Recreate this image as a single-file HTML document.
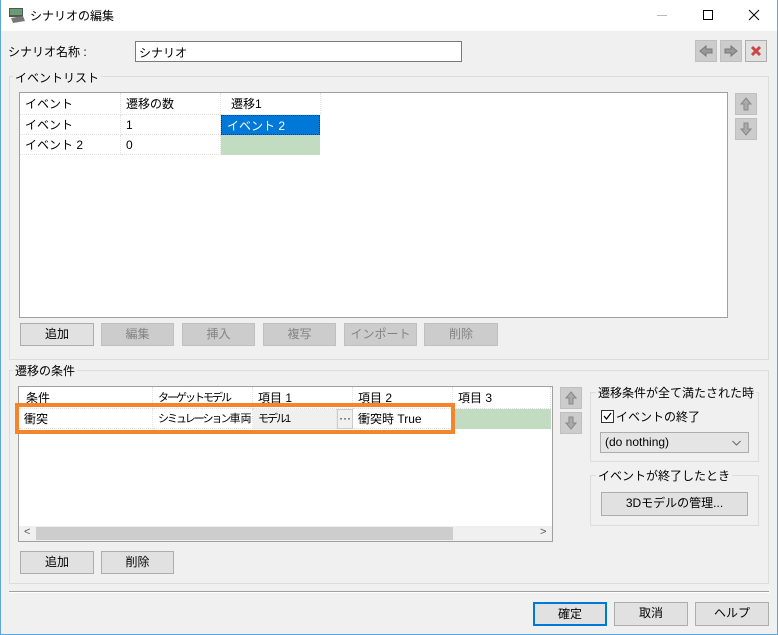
<!DOCTYPE html><html><head><meta charset="utf-8"><style>
*{box-sizing:border-box;margin:0;padding:0}
body{width:778px;height:635px;position:relative;background:#f0f0f0;font-family:"Liberation Sans","Noto Sans CJK JP",sans-serif;font-size:12px;color:#000;overflow:hidden}
.a{position:absolute}
.btn{position:absolute;background:#e1e1e1;border:1px solid #adadad;text-align:center;line-height:21px;font-size:12px}
.dis{background:#cccccc;border-color:#bfbfbf;color:#838383}
.ib{position:absolute;width:22px;height:22px;background:#cccccc;border:1px solid #bfbfbf}
.grp{position:absolute;border:1px solid #dcdcdc}
.gl{position:absolute;background:#f0f0f0;padding:0 2px;font-size:12px}
.cell{position:absolute;height:20px;line-height:20px;padding-left:5px;border-right:1px dotted #e0e0e0;border-bottom:1px dotted #e0e0e0;white-space:nowrap;overflow:hidden}
.nar{letter-spacing:-2px;font-size:11px}
</style></head><body>
<div class="a" style="left:0;top:0;width:778px;height:31px;background:#fff"></div>
<div class="a" style="left:0;top:0;width:1px;height:635px;background:#5ea6d8"></div>
<div class="a" style="right:0;top:0;width:1px;height:635px;background:#5ea6d8"></div>
<div class="a" style="left:0;bottom:0;width:778px;height:1px;background:#5ea6d8"></div>
<svg class="a" style="left:8px;top:6px" width="18" height="18"><rect x="1" y="2" width="14" height="9" fill="#4a5a5a"/><rect x="2" y="3" width="12" height="6" fill="#6a9a70"/><path d="M3 12 L15 10 L17 15 L5 17Z" fill="#777"/></svg>
<div class="a" style="left:30px;top:7px;font-size:12px">シナリオの編集</div>
<div class="a" style="left:657px;top:15px;width:10px;height:1px;background:#bbb"></div>
<div class="a" style="left:703px;top:10px;width:10px;height:10px;border:1px solid #000"></div>
<svg class="a" style="left:748px;top:9px" width="12" height="12"><path d="M1 1L11 11M11 1L1 11" stroke="#000" stroke-width="1"/></svg>

<div class="a" style="left:8px;top:43px">シナリオ名称 :</div>
<div class="a" style="left:135px;top:41px;width:327px;height:21px;background:#fff;border:1px solid #7a7a7a;padding:2px 3px">シナリオ</div>
<div class="ib" style="left:695px;top:40px"><svg width="20" height="20"><path d="M4 10L10 5V8H16V12H10V15Z" fill="#999" stroke="#777"/></svg></div>
<div class="ib" style="left:720px;top:40px"><svg width="20" height="20"><path d="M16 10L10 5V8H4V12H10V15Z" fill="#999" stroke="#777"/></svg></div>
<div class="ib" style="left:745px;top:40px;background:#e1e1e1;border-color:#adadad"><svg width="20" height="20"><path d="M6 6L14 14M14 6L6 14" stroke="#c44" stroke-width="3"/></svg></div>

<div class="grp" style="left:9px;top:76px;width:760px;height:284px"></div>
<div class="gl" style="left:13px;top:69px">イベントリスト</div>
<div class="a" style="left:19px;top:92px;width:709px;height:226px;background:#fff;border:1px solid #a0a0a0"></div>
<div class="cell" style="left:20px;top:93px;width:101px;height:22px;line-height:22px">イベント</div>
<div class="cell" style="left:121px;top:93px;width:100px;height:22px;line-height:22px">遷移の数</div>
<div class="cell" style="left:221px;top:93px;width:100px;height:22px;line-height:22px;padding-left:10px">遷移1</div>
<div class="cell" style="left:20px;top:115px;width:101px">イベント</div>
<div class="cell" style="left:121px;top:115px;width:100px">1</div>
<div class="cell" style="left:221px;top:115px;width:99px;background:#0078d7;color:#fff;border:1px dotted #333">イベント 2</div>
<div class="cell" style="left:20px;top:135px;width:101px">イベント 2</div>
<div class="cell" style="left:121px;top:135px;width:100px">0</div>
<div class="cell" style="left:221px;top:135px;width:99px;background:#c1dcc1;border:none"></div>
<div class="ib" style="left:735px;top:93px"><svg width="20" height="20"><path d="M10 4L15 10H12V16H8V10H5Z" fill="#aaa" stroke="#888"/></svg></div>
<div class="ib" style="left:735px;top:118px"><svg width="20" height="20"><path d="M10 16L15 10H12V4H8V10H5Z" fill="#aaa" stroke="#888"/></svg></div>
<div class="btn" style="left:20px;top:323px;width:74px;height:23px">追加</div>
<div class="btn dis" style="left:101px;top:323px;width:73px;height:23px">編集</div>
<div class="btn dis" style="left:182px;top:323px;width:73px;height:23px">挿入</div>
<div class="btn dis" style="left:263px;top:323px;width:73px;height:23px">複写</div>
<div class="btn dis" style="left:344px;top:323px;width:73px;height:23px">インポート</div>
<div class="btn dis" style="left:424px;top:323px;width:74px;height:23px">削除</div>

<div class="grp" style="left:9px;top:370px;width:760px;height:214px"></div>
<div class="gl" style="left:13px;top:362px">遷移の条件</div>
<div class="a" style="left:18px;top:386px;width:535px;height:156px;background:#fff;border:1px solid #a0a0a0"></div>
<div class="cell" style="left:19px;top:387px;width:134px;height:22px;line-height:22px;padding-left:7px">条件</div>
<div class="cell nar" style="left:153px;top:387px;width:100px;height:22px;line-height:22px">ターゲットモデル</div>
<div class="cell" style="left:253px;top:387px;width:100px;height:22px;line-height:22px">項目 1</div>
<div class="cell" style="left:353px;top:387px;width:100px;height:22px;line-height:22px">項目 2</div>
<div class="cell" style="left:453px;top:387px;width:98px;height:22px;line-height:22px">項目 3</div>
<div class="cell" style="left:19px;top:409px;width:134px">衝突</div>
<div class="cell nar" style="left:153px;top:409px;width:100px">シミュレーション<span style="letter-spacing:0;font-size:11px">車両</span></div>
<div class="cell nar" style="left:253px;top:409px;width:84px;background:#f0f0f0">モデル1</div>
<div class="a" style="left:337px;top:409px;width:16px;height:20px;background:#f0f0f0;border:1px solid #ccc;text-align:center;line-height:16px">···</div>
<div class="cell" style="left:353px;top:409px;width:100px">衝突時 True</div>
<div class="cell" style="left:453px;top:409px;width:98px;background:#c1dcc1;border:none"></div>
<div class="a" style="left:15px;top:403px;width:440px;height:31px;border:4px solid #f5842a"></div>
<div class="a" style="left:19px;top:526px;width:533px;height:15px;background:#f0f0f0"></div>
<div class="a" style="left:36px;top:527px;width:417px;height:13px;background:#cdcdcd"></div>
<div class="a" style="left:24px;top:526px;font-size:11px;color:#555">&lt;</div>
<div class="a" style="left:540px;top:526px;font-size:11px;color:#555">&gt;</div>
<div class="ib" style="left:560px;top:387px"><svg width="20" height="20"><path d="M10 4L15 10H12V16H8V10H5Z" fill="#aaa" stroke="#888"/></svg></div>
<div class="ib" style="left:560px;top:412px"><svg width="20" height="20"><path d="M10 16L15 10H12V4H8V10H5Z" fill="#aaa" stroke="#888"/></svg></div>

<div class="grp" style="left:590px;top:392px;width:169px;height:70px"></div>
<div class="gl" style="left:596px;top:384px">遷移条件が全て満たされた時</div>
<div class="a" style="left:601px;top:410px;width:13px;height:13px;border:1px solid #333;background:#fff"><svg width="11" height="11" style="display:block"><path d="M2 5L4.5 8L9 2" stroke="#000" fill="none" stroke-width="1.2"/></svg></div>
<div class="a" style="left:616px;top:408px">イベントの終了</div>
<div class="a" style="left:600px;top:432px;width:149px;height:21px;background:#e5e5e5;border:1px solid #adadad;padding:2px 4px">(do nothing)<svg style="position:absolute;right:7px;top:7px" width="9" height="6"><path d="M0.5 1L4.5 5L8.5 1" stroke="#666" fill="none"/></svg></div>
<div class="grp" style="left:590px;top:475px;width:169px;height:51px"></div>
<div class="gl" style="left:596px;top:467px">イベントが終了したとき</div>
<div class="btn" style="left:601px;top:492px;width:147px;height:24px">3Dモデルの管理...</div>

<div class="btn" style="left:20px;top:551px;width:74px;height:23px">追加</div>
<div class="btn" style="left:101px;top:551px;width:73px;height:23px">削除</div>

<div class="a" style="left:9px;top:591px;width:760px;height:1px;background:#a0a0a0"></div>
<div class="a" style="left:9px;top:592px;width:760px;height:1px;background:#fff"></div>
<div class="btn" style="left:533px;top:602px;width:74px;height:24px;border:2px solid #0078d7;line-height:20px">確定</div>
<div class="btn" style="left:614px;top:602px;width:74px;height:24px">取消</div>
<div class="btn" style="left:695px;top:602px;width:74px;height:24px">ヘルプ</div>
</body></html>
